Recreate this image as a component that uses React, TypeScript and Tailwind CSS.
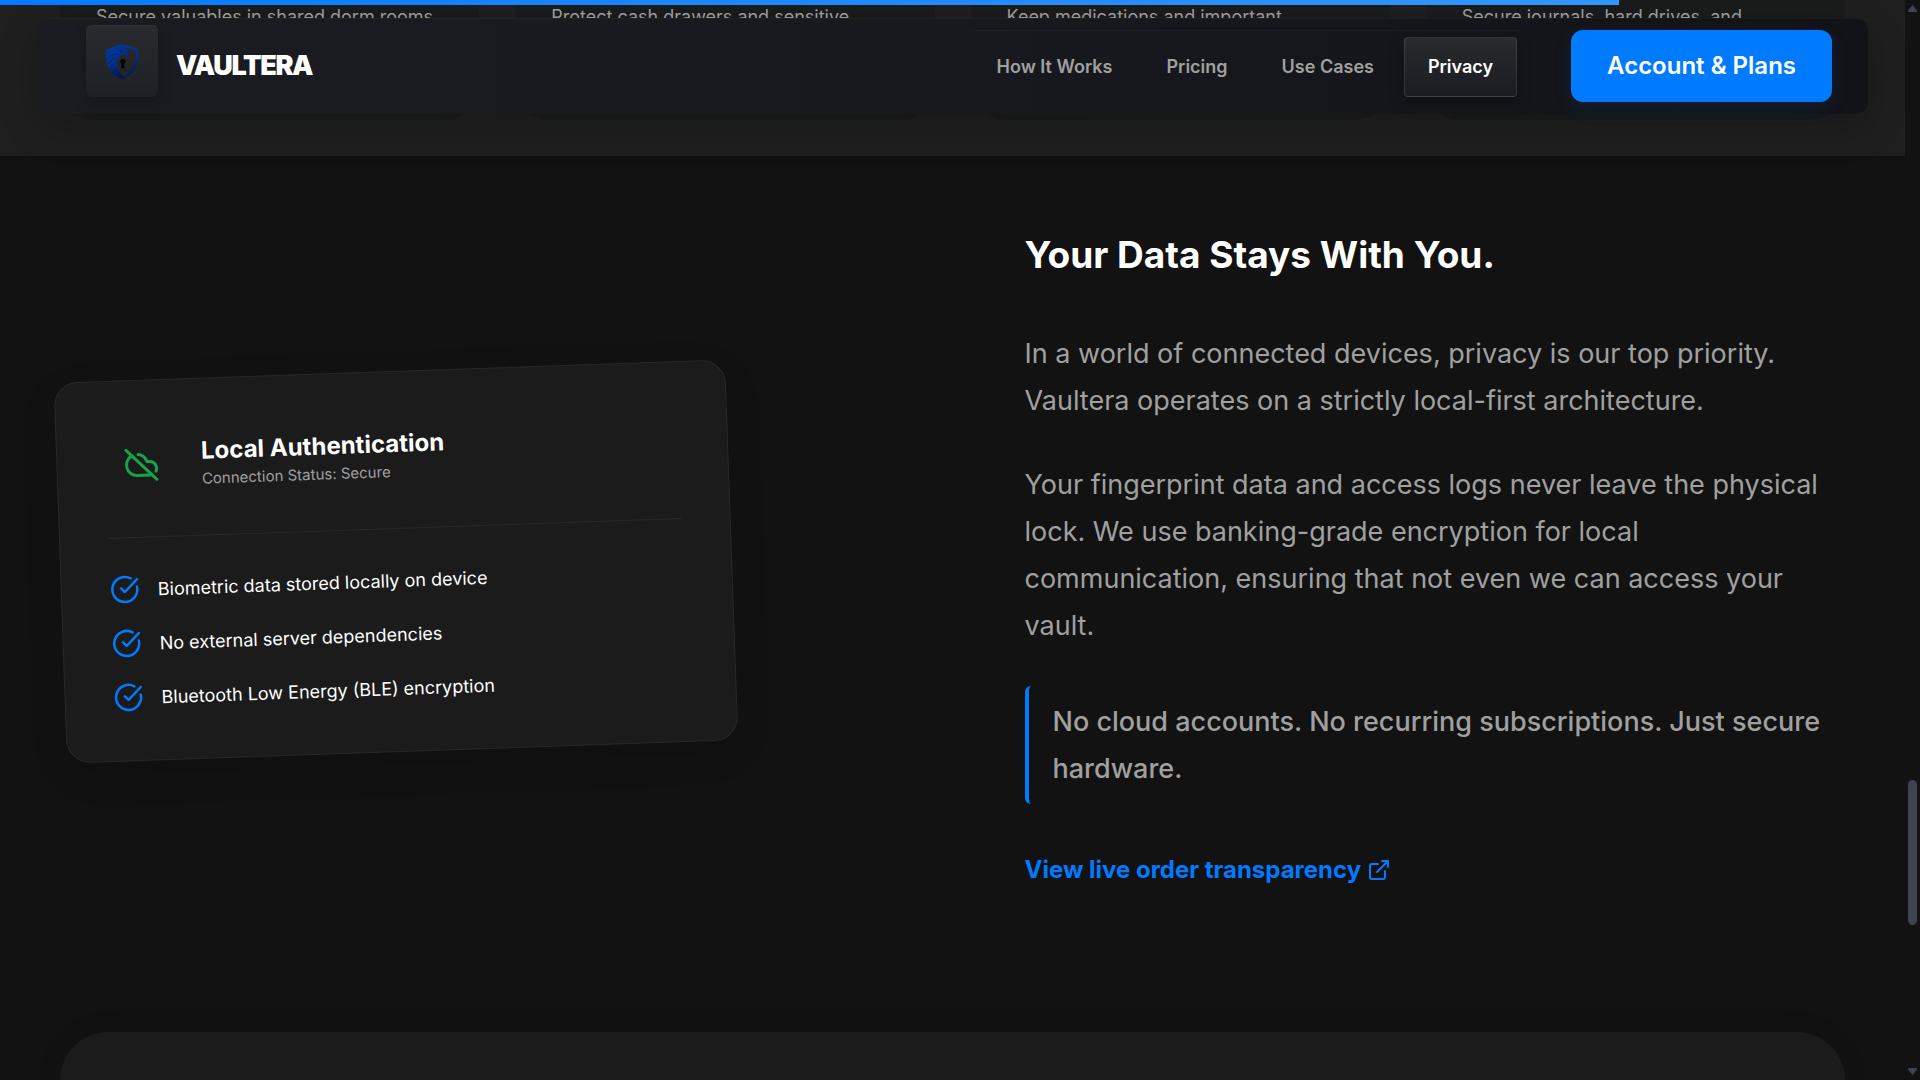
import { CircleCheckBig, CloudOff, ExternalLink } from "lucide-react";

const useCases = [
  "Secure valuables in shared dorm rooms",
  "Protect cash drawers and sensitive",
  "Keep medications and important",
  "Secure journals, hard drives, and",
];

const links = [
  { label: "How It Works", active: false },
  { label: "Pricing", active: false },
  { label: "Use Cases", active: false },
  { label: "Privacy", active: true },
];

const facts = [
  "Biometric data stored locally on device",
  "No external server dependencies",
  "Bluetooth Low Energy (BLE) encryption",
];

function Logo() {
  return (
    <svg viewBox="0 0 36 36" className="size-9" aria-hidden="true">
      <defs>
        <linearGradient id="shield" x1="0" y1="0" x2="0.4" y2="1">
          <stop offset="0" stopColor="#003a9e" />
          <stop offset="0.6" stopColor="#002f8a" />
          <stop offset="1" stopColor="#001a4d" />
        </linearGradient>
      </defs>
      <path
        d="M17 1.800C23 2 28 4 33 6.200 34.200 18 31 28.500 18.500 34"
        fill="none"
        stroke="url(#shield)"
        strokeWidth="2.200"
      />
      <path
        d="M2 6.200C7 4 11 .8 18.500 .8L20 3.600C22.500 4.500 24.500 7 24.500 9.500c.1 1.200-.3 2-.9 2.700-1-1.500-2.600-2.100-4.600-1.700-4.600 1-6.300 5.200-5.800 9.800.4 4.500 2 8.500 6.300 11.700L18.500 35.500C8.500 31.500 3 24 2 15z"
        fill="url(#shield)"
      />
      <path
        d="M2.500 15.500c3-3.500 6.500-5 10.500-5.500M4 20c2-3 4-5 7-6.200M6 25c1-2.800 2-4.800 4.500-6.500M9 29c.2-2 .8-3.500 1.600-5"
        fill="none"
        stroke="#0a1a3c"
        strokeWidth="0.600"
      />
      <path d="M15 6.300l4.500.9-2.500.7z" fill="#0a1a3c" />
      <circle cx="18.800" cy="17.500" r="2.500" fill="#020204" />
      <path d="M17.800 19h2l.9 5.200h-3.800z" fill="#020204" />
    </svg>
  );
}

function Header() {
  return (
    <header className="absolute top-[18px] right-[37px] left-[38px] z-10 flex h-24 items-center justify-between rounded-xl border-t border-white/3 bg-linear-to-r from-[#1b1c21] via-[#17191e] to-[#121318] pr-9 pb-px pl-12 shadow-[0_12px_40px_rgba(0,0,0,0.2)]">
      <a href="#top" className="flex items-center gap-[18px]">
        <span className="flex size-[72px] -translate-y-[5px] items-center justify-center rounded-md border-t border-white/8 bg-linear-to-b from-[#2a2b2f] to-[#1f2025] shadow-[0_6px_16px_rgba(0,0,0,0.2)]">
          <Logo />
        </span>
        <span className="text-[27px] font-black tracking-tighter text-white">VAULTERA</span>
      </a>
      <div className="flex items-center gap-12">
        <nav className="flex items-center gap-1.5 rounded-md border-t border-white/3 p-1.5 text-[18px] font-semibold text-[#a0a0a0]">
          {links.map((link) =>
            link.active ? (
              <a
                key={link.label}
                href="#privacy"
                aria-current="page"
                className="flex h-[60px] items-center rounded-sm border border-white/10 bg-linear-to-b from-[#2a2b2f] to-[#1b1c21] px-[23px] text-white shadow-[0_6px_16px_rgba(0,0,0,0.25)]"
              >
                {link.label}
              </a>
            ) : (
              <a key={link.label} href="#section" className="flex h-[60px] items-center px-6">
                {link.label}
              </a>
            ),
          )}
        </nav>
        <button
          type="button"
          className="h-[72px] rounded-xl bg-[#007aff] px-9 text-[24px] font-semibold text-white shadow-[0_6px_20px_rgba(0,122,255,0.1)]"
        >
          Account &amp; Plans
        </button>
      </div>
    </header>
  );
}

function AuthCard() {
  return (
    <div className="w-full max-w-2xl -rotate-2 rounded-3xl border border-[#292929] bg-[#1b1b1b] p-12 shadow-[0_12px_36px_rgba(0,0,0,0.12)]">
      <div className="flex items-center gap-6 border-b border-[#292929] pb-9">
        <div className="flex size-[72px] shrink-0 items-center justify-center">
          <CloudOff size={36} className="text-[#16a34a]" />
        </div>
        <div>
          <h3 className="text-[24px] leading-8 font-bold text-white">Local Authentication</h3>
          <p className="text-[15px] leading-6 text-[#a0a0a0]">Connection Status: Secure</p>
        </div>
      </div>
      <ul className="flex flex-col gap-6 pt-9">
        {facts.map((fact) => (
          <li key={fact} className="flex h-[30px] items-center gap-[18px] text-[18px] text-white">
            <CircleCheckBig size={30} className="shrink-0 text-[#007aff]" />
            {fact}
          </li>
        ))}
      </ul>
    </div>
  );
}

function Scrollbar() {
  return (
    <div className="flex w-[15px] shrink-0 flex-col items-center justify-between bg-[#121212] py-1" aria-hidden="true">
      <svg viewBox="0 0 9 8" className="h-2 w-[9px]">
        <path d="M4.500 1L9 6.500v1.500H0V6.500z" fill="#3d434f" />
      </svg>
      <div className="flex w-full flex-1 flex-col items-center">
        <div className="grow-[768]" />
        <div className="w-[9px] grow-[145] rounded-full bg-[#3d434f]" />
        <div className="grow-[143]" />
      </div>
      <svg viewBox="0 0 9 8" className="h-2 w-[9px]">
        <path d="M4.500 7L9 1.500V0H0v1.500z" fill="#3d434f" />
      </svg>
    </div>
  );
}

export default function App() {
  return (
    <div className="flex h-screen overflow-hidden bg-[#121212] font-[Inter,sans-serif]">
      <div className="relative flex min-w-0 flex-1 flex-col overflow-hidden">
        <div className="absolute inset-x-0 top-0 z-20 h-[5px]">
          <div className="h-full w-[85%] bg-linear-to-r from-[#007aff] to-[#3395ff]" />
        </div>
        <Header />

        <section className="shrink-0 bg-[#1f1f1f] px-[60px] pb-9">
          <div className="grid grid-cols-4 gap-9">
            {useCases.map((text) => (
              <article key={text} className="h-[120px] rounded-b-[36px] bg-[#1a1b1b] px-9 pt-0.5">
                <p className="text-[18px] leading-[29px] whitespace-nowrap text-[#a0a0a0]">{text}</p>
              </article>
            ))}
          </div>
        </section>

        <section className="grid shrink-0 grid-cols-2 items-center gap-36 px-[60px] py-[72px]">
          <AuthCard />
          <div className="text-[27px] leading-[47px] text-[#a0a0a0]">
            <h2 className="text-[37px] leading-[54px] font-bold text-white">Your Data Stays With You.</h2>
            <p className="mt-12">
              In a world of connected devices, privacy is our top priority. Vaultera operates on a strictly local-first
              architecture.
            </p>
            <p className="mt-[37px]">
              Your fingerprint data and access logs never leave the physical lock. We use banking-grade encryption for
              local communication, ensuring that not even we can access your vault.
            </p>
            <blockquote className="mt-[37px] rounded-md border-l-4 border-[#007aff] py-3 pl-6 font-medium">
              No cloud accounts. No recurring subscriptions. Just secure hardware.
            </blockquote>
            <a
              href="#orders"
              className="mt-[42px] inline-flex items-center gap-1.5 text-[24px] leading-12 font-bold text-[#007aff]"
            >
              View live order transparency
              <ExternalLink size={24} />
            </a>
          </div>
        </section>

        <section className="shrink-0 px-[60px] pt-[66px]">
          <div className="h-96 rounded-[48px] bg-[#1b1b1b] shadow-[0_0_24px_rgba(0,0,0,0.12)]" />
        </section>
      </div>
      <Scrollbar />
    </div>
  );
}
